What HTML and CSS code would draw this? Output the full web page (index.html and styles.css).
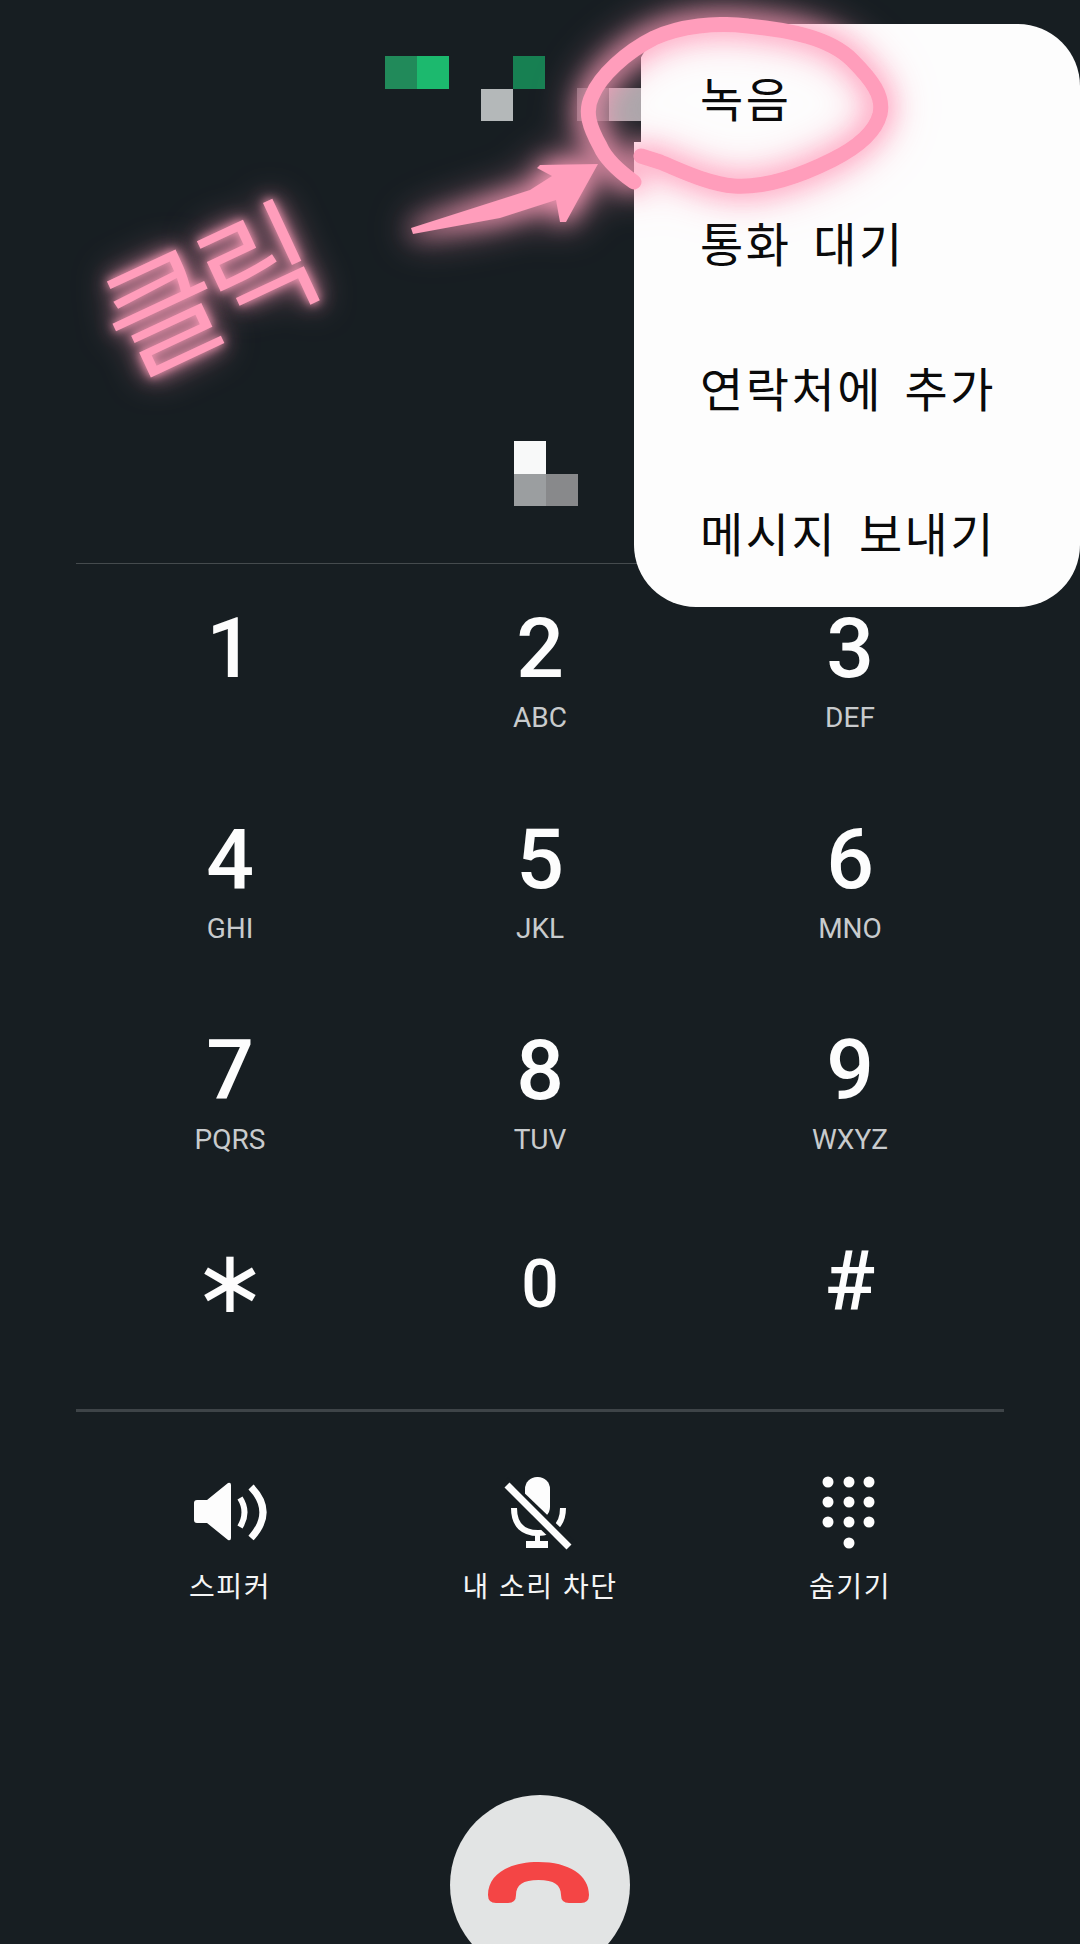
FILE: index.html
```html
<!DOCTYPE html>
<html lang="ko">
<head>
<meta charset="utf-8">
<title>통화</title>
<link rel="stylesheet" href="styles.css">
</head>
<body>
<main class="screen">
  <section class="caller">
    <div class="mosaic mosaic-name">
      <i class="px c-green1"></i><i class="px c-green2"></i><i class="px"></i><i class="px"></i><i class="px c-green3"></i><i class="px"></i><i class="px"></i><i class="px"></i>
      <i class="px"></i><i class="px"></i><i class="px"></i><i class="px c-gray1"></i><i class="px"></i><i class="px"></i><i class="px c-gray2"></i><i class="px c-gray3"></i>
    </div>
    <div class="mosaic mosaic-time">
      <i class="px c-white"></i><i class="px"></i>
      <i class="px c-gray4"></i><i class="px c-gray5"></i>
    </div>
  </section>
  <div class="rule-thin"></div>
  <section class="keypad">
    <div class="key"><span class="digit">1</span></div>
    <div class="key"><span class="digit">2</span><span class="sub">ABC</span></div>
    <div class="key"><span class="digit">3</span><span class="sub">DEF</span></div>
    <div class="key"><span class="digit">4</span><span class="sub">GHI</span></div>
    <div class="key"><span class="digit">5</span><span class="sub">JKL</span></div>
    <div class="key"><span class="digit">6</span><span class="sub">MNO</span></div>
    <div class="key"><span class="digit">7</span><span class="sub">PQRS</span></div>
    <div class="key"><span class="digit">8</span><span class="sub">TUV</span></div>
    <div class="key"><span class="digit">9</span><span class="sub">WXYZ</span></div>
    <div class="key"><span class="digit star">∗</span></div>
    <div class="key"><span class="digit zero">0</span></div>
    <div class="key"><span class="digit">#</span></div>
  </section>
  <div class="rule-thick"></div>
  <section class="actions">
    <div class="action">
      <svg class="action-icon" viewBox="0 0 80 80" aria-hidden="true">
        <path class="fill" d="M4 31q0-3 3-3h10l21-17q3-1 3 2v53q0 3-3 2l-21-17h-10q-3 0-3-3z"/>
        <path class="line" d="M50 26Q59 40 50 55"/>
        <path class="line thick" d="M61 15Q85 40 61 66"/>
      </svg>
      <span class="action-label">스피커</span>
    </div>
    <div class="action">
      <svg class="action-icon" viewBox="0 0 80 80" aria-hidden="true">
        <rect class="fill" x="25" y="5" width="25" height="42" rx="12"/>
        <path class="line" d="M14 36c0 18 10 25 24 25s25-7 25-25"/>
        <rect class="fill" x="35" y="60" width="5" height="10"/>
        <rect class="fill" x="26" y="69" width="22" height="7"/>
        <path class="cut" d="M3 11L72 77"/>
        <path class="slash" d="M7 13L69 75"/>
      </svg>
      <span class="action-label">내 소리 차단</span>
    </div>
    <div class="action">
      <svg class="action-icon" viewBox="0 0 80 80" aria-hidden="true">
        <g class="fill">
          <circle cx="18" cy="10" r="5.5"/><circle cx="39" cy="10" r="5.5"/><circle cx="59" cy="10" r="5.5"/>
          <circle cx="18" cy="30" r="5.5"/><circle cx="39" cy="30" r="5.5"/><circle cx="59" cy="30" r="5.5"/>
          <circle cx="18" cy="50" r="5.5"/><circle cx="39" cy="50" r="5.5"/><circle cx="59" cy="50" r="5.5"/>
          <circle cx="39" cy="71" r="5.5"/>
        </g>
      </svg>
      <span class="action-label">숨기기</span>
    </div>
  </section>
  <section class="end-wrap">
    <div class="end-btn">
      <svg class="handset" viewBox="0 0 113 55" aria-hidden="true">
        <path d="M6 40C6 20 26 7 56.5 7C87 7 107 20 107 40Q107 48 99 48H87Q79 48 79 40C79 30 72 25 56.5 25C41 25 34 30 34 40Q34 48 26 48H14Q6 48 6 40Z"/>
      </svg>
    </div>
  </section>

  <ul class="menu">
    <li>녹음</li>
    <li>통화 대기</li>
    <li>연락처에 추가</li>
    <li>메시지 보내기</li>
  </ul>
  <div class="menu-notch"></div>
  <div class="mosaic-over">
    <i class="px c-gray6"></i><i class="px c-gray7"></i>
  </div>

  <svg class="scribble" viewBox="0 0 1080 300" aria-hidden="true">
    <path class="ring" d="M634 182C620 172 606 160 600 146C590 128 584 112 592 96C600 76 626 52 654 38C680 26 716 22 748 26C790 30 830 38 852 60C872 80 884 96 880 114C876 130 860 146 832 160C800 176 764 188 734 186C708 184 680 170 660 162L641 156"/>
    <path class="arrow" d="M411 228L530 190L552 176L537 168L540 165L598 164L578 200L566 222L560 222L556 200L500 218L413 234Z"/>
  </svg>
  <div class="click-note">클릭</div>
</main>
</body>
</html>
```

FILE: styles.css
```css
* { box-sizing: border-box; }
html, body { margin: 0; padding: 0; background: #171e22; }
.screen {
  position: relative;
  width: 1080px;
  height: 1944px;
  overflow: hidden;
  display: flex;
  flex-direction: column;
  background: #171e22;
  color: #fdfdfd;
  font-family: "Noto Sans CJK KR", "Noto Sans", sans-serif;
}

/* caller header */
.caller {
  height: 563px;
  flex: none;
  padding: 56px 0 0 385px;
}
.mosaic {
  display: grid;
  grid-auto-rows: 32.5px;
  grid-template-columns: repeat(8, 32px);
}
.mosaic-time {
  grid-template-columns: repeat(2, 32px);
  margin: 320px 0 0 129px;
}
.px { display: block; }
.c-green1 { background: #218a5a; }
.c-green2 { background: #1cb96e; }
.c-green3 { background: #178052; }
.c-gray1 { background: #b4b8b9; }
.c-gray2 { background: #6a6c70; }
.c-gray3 { background: #a3a2a5; }
.c-white { background: #f8f9f9; }
.c-gray4 { background: #9b9ea0; }
.c-gray5 { background: #88898b; }

.rule-thin { height: 1px; flex: none; margin: 0 76px; background: #454b4e; }
.rule-thick { height: 3px; flex: none; margin: 1px 76px 1px; background: #3e4448; }

/* keypad */
.keypad {
  flex: none;
  display: grid;
  grid-template-columns: repeat(3, 310px);
  grid-auto-rows: 211px;
  padding: 0 75px;
}
.key {
  display: flex;
  flex-direction: column;
  align-items: center;
  padding-top: 40px;
}
.digit {
  font-family: Roboto, sans-serif;
  font-weight: 500;
  font-size: 84px;
  line-height: 90px;
  height: 90px;
  color: #fdfdfd;
}
.zero { font-size: 66px; padding-top: 3px; }
.star { font-family: "DejaVu Sans", sans-serif; font-weight: 400; font-size: 88px; }
.sub {
  margin-top: 9px;
  font-family: Roboto, sans-serif;
  font-weight: 400;
  font-size: 28px;
  line-height: 30px;
  color: #c8cbcd;
}

/* in-call actions */
.actions {
  flex: none;
  display: grid;
  grid-template-columns: repeat(3, 310px);
  padding: 59px 75px 0;
}
.action { display: flex; flex-direction: column; align-items: center; }
.action-icon { width: 80px; height: 80px; display: block; }
.fill { fill: #fdfdfd; }
.line { fill: none; stroke: #fdfdfd; stroke-width: 6; }
.thick { stroke-width: 7; }
.cut { fill: none; stroke: #171e22; stroke-width: 15; }
.slash { fill: none; stroke: #fdfdfd; stroke-width: 7; }
.action-label {
  margin-top: 15px;
  font-size: 28px;
  line-height: 36px;
  letter-spacing: 1.5px;
  color: #f4f5f5;
  white-space: nowrap;
}

/* end call */
.end-wrap { flex: none; display: flex; justify-content: center; padding-top: 192px; }
.end-btn {
  width: 180px;
  height: 180px;
  flex: none;
  border-radius: 50%;
  background: #e2e4e4;
  display: flex;
  align-items: center;
  justify-content: center;
}
.handset { width: 113px; height: 55px; margin: 0 4px 5px 0; fill: #f44545; }

/* overflow menu */
.menu {
  position: absolute;
  top: 24px;
  left: 634px;
  width: 446px;
  height: 583px;
  margin: 0;
  padding: 0 0 0 66px;
  list-style: none;
  background: #fdfdfd;
  border-radius: 62px;
  color: #0a0a0a;
}
.menu li {
  height: 145px;
  display: flex;
  align-items: center;
  font-size: 47px;
  letter-spacing: 2.5px;
  word-spacing: 6px;
  white-space: nowrap;
}
.menu-notch {
  position: absolute;
  top: 24px;
  left: 634px;
  width: 7px;
  height: 118px;
  background: #171e22;
}
.mosaic-over {
  position: absolute;
  top: 88px;
  left: 577px;
  display: grid;
  grid-template-columns: repeat(2, 32px);
  grid-auto-rows: 33px;
}
.c-gray6 { background: #5b5d61; }
.c-gray7 { background: #a9a7aa; }

/* pink annotation */
.scribble {
  position: absolute;
  top: 0;
  left: 0;
  width: 1080px;
  height: 300px;
  overflow: visible;
  filter: drop-shadow(0 0 12px #ff9dbb) drop-shadow(0 0 18px rgba(255, 157, 187, .8));
}
.ring { fill: none; stroke: #ff9dbb; stroke-width: 15; stroke-linecap: round; stroke-linejoin: round; }
.arrow { fill: #ff9dbb; }
.click-note {
  position: absolute;
  top: 214px;
  left: 84px;
  width: 240px;
  text-align: center;
  font-size: 124px;
  line-height: 140px;
  font-weight: 400;
  letter-spacing: -8px;
  color: #ff9dbb;
  transform: rotate(-25deg);
  text-shadow: 0 0 10px #ff9dbb, 0 0 20px rgba(255, 157, 187, .9), 0 0 36px rgba(255, 157, 187, .7);
  white-space: nowrap;
}
```
